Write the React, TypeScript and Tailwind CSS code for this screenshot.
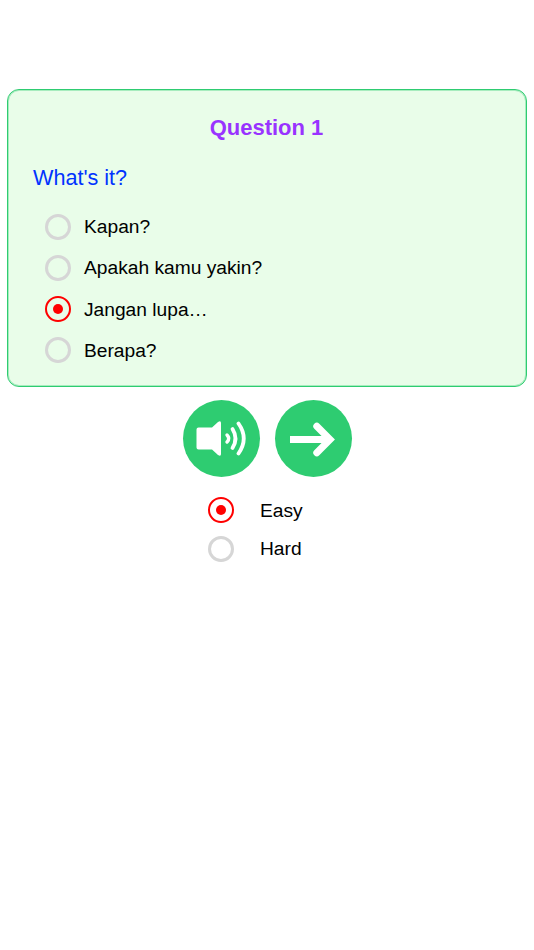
const FONT = "font-['Liberation_Sans',Arial,sans-serif]";

const answers = [
  { label: 'Kapan?', checked: false },
  { label: 'Apakah kamu yakin?', checked: false },
  { label: 'Jangan lupa…', checked: true },
  { label: 'Berapa?', checked: false },
];

function Radio({ checked }: { checked: boolean }) {
  return (
    <span
      className={
        checked
          ? 'flex h-[26px] w-[26px] shrink-0 items-center justify-center rounded-full border-[2.5px] border-[#ff0000]'
          : 'flex h-[26px] w-[26px] shrink-0 items-center justify-center rounded-full border-[3px] border-[#d6d6d6]'
      }
    >
      {checked ? <span className="h-[10px] w-[10px] rounded-full bg-[#ff0000]" /> : null}
    </span>
  );
}

function SpeakerIcon() {
  return (
    <svg width="52" height="52" viewBox="0 0 52 52" fill="none">
      <path
        d="M3.5 14.5 H17 L23 9 Q26 7 26 10 V41 Q26 44 23 42 L17 36.5 H3.5 Q1.5 36.5 1.5 34.5 V16.5 Q1.5 14.5 3.5 14.5 Z"
        fill="#fff"
      />
      <g stroke="#fff" strokeLinecap="round" fill="none">
        <path d="M32 22 Q35.5 25.5 32 29" strokeWidth="3.4" />
        <path d="M37.5 16 Q43.5 25.5 37.5 35" strokeWidth="3.8" />
        <path d="M43.5 10.5 Q54 25.5 43.5 40.5" strokeWidth="3.8" />
      </g>
    </svg>
  );
}

function ArrowIcon() {
  return (
    <svg width="50" height="40" viewBox="0 0 50 40" fill="none">
      <path d="M2 20.5 H40" stroke="#fff" strokeWidth="7" />
      <path d="M28.8 7.3 L42 20.5 L28.8 33.7" stroke="#fff" strokeWidth="7" strokeLinecap="round" strokeLinejoin="miter" />
    </svg>
  );
}

export default function App() {
  return (
    <div className={`${FONT} min-h-[950px] w-[534px] bg-white pt-[89px] text-black`}>
      <div className="mx-[7px] h-[298px] rounded-[12px] border border-[#2ecc71] bg-[#e9fde9] pl-[25px] pt-[24px] shadow-[inset_0_0_0_1px_rgba(46,204,113,0.35)]">
        <h1 className="pr-[26px] text-center text-[22px] font-bold leading-[28px] text-[#9933ff]">Question 1</h1>
        <p className="mt-[22px] text-[21.6px] leading-[28px] text-[#0033ff]">What's it?</p>
        <ul className="mt-[15px] flex flex-col pl-[12px]">
          {answers.map((answer) => (
            <li key={answer.label} className="flex h-[41.25px] items-center gap-[13px] text-[19.2px]">
              <span className="mb-[2px]">
                <Radio checked={answer.checked} />
              </span>
              <span>{answer.label}</span>
            </li>
          ))}
        </ul>
      </div>

      <div className="mt-[13px] flex justify-center gap-[15px]">
        <button className="flex h-[77px] w-[77px] items-center justify-center rounded-full bg-[#2ecc71]">
          <SpeakerIcon />
        </button>
        <button className="flex h-[77px] w-[77px] items-center justify-center rounded-full bg-[#2ecc71]">
          <ArrowIcon />
        </button>
      </div>

      <div className="mt-[13px] flex flex-col pl-[208px]">
        <label className="flex h-[39px] items-center gap-[26px] text-[19.2px]">
          <Radio checked />
          <span className="pt-[3px]">Easy</span>
        </label>
        <label className="flex h-[39px] items-center gap-[26px] text-[19.2px]">
          <Radio checked={false} />
          <span className="pt-[1px]">Hard</span>
        </label>
      </div>
    </div>
  );
}
